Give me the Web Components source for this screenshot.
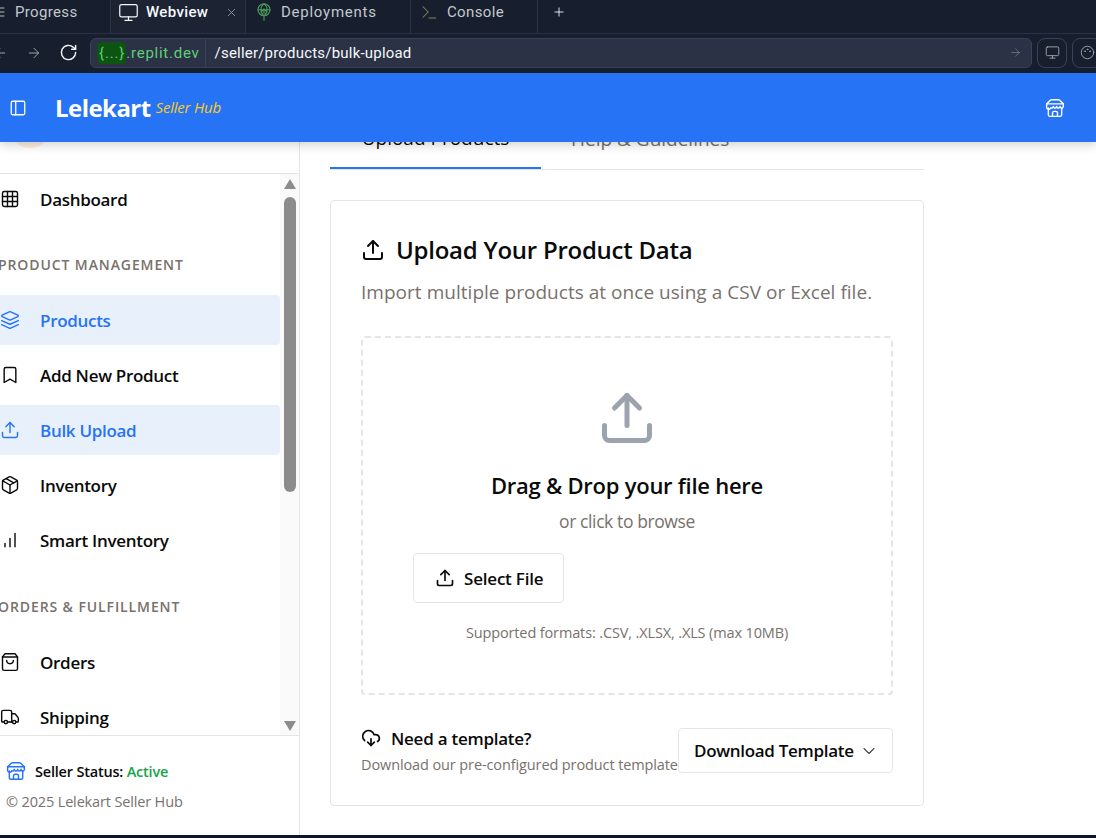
<!DOCTYPE html>
<html lang="en">
<head>
<meta charset="utf-8">
<title>Lelekart Seller Hub</title>
<style>
  html, body { margin: 0; height: 100%; overflow: hidden; background: #fff; }
  body { display: flex; flex-direction: column; height: 838px; font-family: "Open Sans", "Noto Sans", sans-serif; }
</style>
</head>
<body>
<ide-chrome></ide-chrome>
<seller-header></seller-header>
<page-body>
  <seller-sidebar slot="side"></seller-sidebar>
  <upload-page slot="main"></upload-page>
</page-body>

<script>
const ICONS = {
  panel: '<rect x="3" y="3" width="18" height="18" rx="2"/><path d="M9 3v18"/>',
  store: '<path d="m2 7 4.41-4.41A2 2 0 0 1 7.83 2h8.34a2 2 0 0 1 1.42.59L22 7"/><path d="M4 12v8a2 2 0 0 0 2 2h12a2 2 0 0 0 2-2v-8"/><path d="M15 22v-4a2 2 0 0 0-2-2h-2a2 2 0 0 0-2 2v4"/><path d="M2 7h20"/><path d="M22 7v3a2 2 0 0 1-1 1.73 2 2 0 0 1-2 0 2 2 0 0 1-1-1.73 2 2 0 0 1-1 1.73 2 2 0 0 1-2 0 2 2 0 0 1-1-1.73 2 2 0 0 1-1 1.73 2 2 0 0 1-2 0 2 2 0 0 1-1-1.73 2 2 0 0 1-1 1.73 2 2 0 0 1-2 0A2 2 0 0 1 2 10V7"/>',
  grid: '<rect x="3" y="3" width="18" height="18" rx="2"/><path d="M3 9h18M3 15h18M9 3v18M15 3v18"/>',
  layers: '<path d="m12.83 2.18a2 2 0 0 0-1.66 0L2.6 6.08a1 1 0 0 0 0 1.83l8.58 3.91a2 2 0 0 0 1.66 0l8.58-3.9a1 1 0 0 0 0-1.83Z"/><path d="m22 17.65-9.17 4.16a2 2 0 0 1-1.66 0L2 17.65"/><path d="m22 12.65-9.17 4.16a2 2 0 0 1-1.66 0L2 12.65"/>',
  bookmark: '<path d="m19 21-7-4-7 4V5a2 2 0 0 1 2-2h10a2 2 0 0 1 2 2v16z"/>',
  upload: '<path d="M21 15v4a2 2 0 0 1-2 2H5a2 2 0 0 1-2-2v-4"/><path d="m17 8-5-5-5 5"/><path d="M12 3v12"/>',
  box: '<path d="m7.5 4.27 9 5.15"/><path d="M21 8a2 2 0 0 0-1-1.73l-7-4a2 2 0 0 0-2 0l-7 4A2 2 0 0 0 3 8v8a2 2 0 0 0 1 1.73l7 4a2 2 0 0 0 2 0l7-4A2 2 0 0 0 21 16Z"/><path d="m3.3 7 8.7 5 8.7-5"/><path d="M12 22V12"/>',
  bars: '<path d="M12 20V10M18 20V4M6 20v-4"/>',
  bag: '<path d="M6 2 3 6v14a2 2 0 0 0 2 2h14a2 2 0 0 0 2-2V6l-3-4Z"/><path d="M3 6h18"/><path d="M16 10a4 4 0 0 1-8 0"/>',
  truck: '<path d="M14 18V6a2 2 0 0 0-2-2H4a2 2 0 0 0-2 2v11a1 1 0 0 0 1 1h2"/><path d="M15 18H9"/><path d="M19 18h2a1 1 0 0 0 1-1v-3.65a1 1 0 0 0-.22-.624l-3.48-4.35A1 1 0 0 0 17.52 8H14"/><circle cx="17" cy="18" r="2"/><circle cx="7" cy="18" r="2"/>',
  cloud: '<path d="M12 13v8l-4-4"/><path d="m12 21 4-4"/><path d="M4.393 15.269A7 7 0 1 1 15.71 8h1.79a4.5 4.5 0 0 1 2.436 8.284"/>',
  chevron: '<path d="m6 9 6 6 6-6"/>',
  monitor: '<rect x="2" y="3" width="20" height="14" rx="2"/><path d="M8 21h8M12 17v4"/>',
  arrow: '<path d="M5 12h14M12 5l7 7-7 7"/>',
  back: '<path d="M19 12H5M12 19l-7-7 7-7"/>',
  reload: '<path d="M21 12a9 9 0 1 1-3-6.7L21 8"/><path d="M21 3v5h-5"/>',
  close: '<path d="M18 6 6 18M6 6l12 12"/>',
  plus: '<path d="M5 12h14M12 5v14"/>',
  prompt: '<path d="m4 5 7 7-7 7"/><path d="M12 20h9"/>',
  list: '<path d="M4 6h14M4 12h14M4 18h14"/>',
  globe: '<circle cx="12" cy="9" r="8"/><path d="M4 9h16M12 1c-3 2-4 5-4 8s1 5 2 6M12 1c3 2 4 5 4 8s-1 5-2 6M12 23V8M8 12l4-4 4 4"/>',
  palette: '<circle cx="12" cy="12" r="10"/><circle cx="8" cy="10" r=".6"/><circle cx="12" cy="7" r=".6"/><circle cx="16" cy="10" r=".6"/>'
};

class UiIcon extends HTMLElement {
  connectedCallback() {
    const size = this.getAttribute('size') || 24;
    const stroke = this.getAttribute('stroke') || 2;
    this.attachShadow({ mode: 'open' });
    this.shadowRoot.innerHTML = `
      <style>
        :host { display: inline-flex; flex: none; width: ${size}px; height: ${size}px; }
        svg { width: 100%; height: 100%; display: block; }
      </style>
      <svg viewBox="0 0 24 24" fill="none" stroke="currentColor" stroke-width="${stroke}" stroke-linecap="round" stroke-linejoin="round">${ICONS[this.getAttribute('name')] || ''}</svg>`;
  }
}
customElements.define('ui-icon', UiIcon);

class IdeChrome extends HTMLElement {
  connectedCallback() {
    this.attachShadow({ mode: 'open' });
    this.shadowRoot.innerHTML = `
      <style>
        :host { display: block; flex: none; height: 73px; background: #171f2e; color: #c2c8cc; font: 15px/20px Roboto, "Open Sans", sans-serif; overflow: hidden; letter-spacing: .35px; }
        .tabs { display: flex; height: 33px; border-bottom: 1px solid #2b3245; margin-left: -15px; }
        .tab { display: flex; align-items: center; padding-bottom: 9px; border-right: 1px solid #2b3245; box-sizing: border-box; }
        .tab.first { width: 126px; padding-left: 7px; gap: 7px; }
        .tab.active { color: #f5f9fc; background: #1c2333; width: 135px; padding-left: 7px; gap: 7px; font-weight: 500; }
        .tab.active .x { margin-left: 10px; color: #9da2a6; }
        .tab.dep { width: 165px; padding-left: 9px; gap: 8px; letter-spacing: .75px; }
        .tab.con { width: 127px; padding-left: 9px; gap: 9px; }
        .plus { display: flex; align-items: center; padding-bottom: 9px; margin-left: 14px; color: #f5f9fc; }
        .green { color: #4a9a5a; }
        .olive { color: #8a8458; }
        .bar { display: flex; align-items: center; height: 37px; padding-bottom: 2px; margin-left: -8px; }
        .nav { display: flex; align-items: center; gap: 12px; color: #9da2a6; }
        .url { flex: none; display: flex; align-items: center; width: 942px; height: 30px; box-sizing: border-box; margin-left: 12px; border: 1px solid #3a4258; border-radius: 6px; background: #2b3245; color: #f5f9fc; }
        .host { display: flex; align-items: center; height: 100%; padding: 0 5px 0 6px; border-right: 1px solid #3a4258; color: #5fcf75; letter-spacing: .75px; }
        .chip { background: #0d5312; color: #5fcf75; border-radius: 5px; padding: 1px 1px 1px 2px; font-size: 15px; line-height: 20px; letter-spacing: .85px; }
        .path { flex: 1; padding-left: 9px; letter-spacing: .2px; }
        .go { margin-right: 9px; color: #6f7681; }
        .sq { flex: none; width: 30px; height: 30px; box-sizing: border-box; margin-left: 5px; border: 1px solid #3a4258; border-radius: 8px; display: flex; align-items: center; justify-content: center; color: #9da2a6; }
      </style>
      <div class="tabs">
        <div class="tab first"><ui-icon name="list" size="16" stroke="1.4"></ui-icon><span>Progress</span></div>
        <div class="tab active"><ui-icon name="monitor" size="21" stroke="1.4"></ui-icon><span>Webview</span><ui-icon class="x" name="close" size="13" stroke="1.5"></ui-icon></div>
        <div class="tab dep"><ui-icon class="green" name="globe" size="18" stroke="1.5"></ui-icon><span>Deployments</span></div>
        <div class="tab con"><ui-icon class="olive" name="prompt" size="18" stroke="1.4"></ui-icon><span>Console</span></div>
        <div class="plus"><ui-icon name="plus" size="14" stroke="1.5"></ui-icon></div>
      </div>
      <div class="bar">
        <div class="nav">
          <ui-icon name="back" size="16" stroke="1.5"></ui-icon>
          <ui-icon name="arrow" size="16" stroke="1.5" style="margin-left:6px"></ui-icon>
          <ui-icon name="reload" size="19" stroke="1.8" style="margin-left:5px;color:#f5f9fc"></ui-icon>
        </div>
        <div class="url">
          <div class="host"><span class="chip">{...}</span>.replit.dev</div>
          <div class="path">/seller/products/bulk-upload</div>
          <ui-icon class="go" name="arrow" size="13" stroke="1.5"></ui-icon>
        </div>
        <div class="sq"><ui-icon name="monitor" size="15" stroke="1.5"></ui-icon></div>
        <div class="sq"><ui-icon name="palette" size="15" stroke="1.5"></ui-icon></div>
      </div>`;
  }
}
customElements.define('ide-chrome', IdeChrome);

class SellerHeader extends HTMLElement {
  connectedCallback() {
    this.attachShadow({ mode: 'open' });
    this.shadowRoot.innerHTML = `
      <style>
        :host { display: flex; flex: none; align-items: center; height: 69px; padding: 0 31px 0 9px; background: #2673f5; color: #fff; position: relative; z-index: 10; box-shadow: 0 3px 10px rgba(0,0,0,.18); }
        .brand { font-size: 24px; font-weight: 700; margin-left: 28px; letter-spacing: -.55px; }
        .sub { font-size: 15px; font-style: italic; color: #facc15; margin-left: 5px; letter-spacing: -.2px; position: relative; top: -1px; }
        .end { margin-left: auto; }
      </style>
      <ui-icon name="panel" size="18" stroke="1.7"></ui-icon>
      <span class="brand">Lelekart</span><span class="sub">Seller Hub</span>
      <ui-icon class="end" name="store" size="20" stroke="1.7"></ui-icon>`;
  }
}
customElements.define('seller-header', SellerHeader);

class PageBody extends HTMLElement {
  connectedCallback() {
    this.attachShadow({ mode: 'open' });
    this.shadowRoot.innerHTML = `
      <style>
        :host { display: flex; flex: 1; min-height: 0; overflow: hidden; border-bottom: 3px solid #0e1525; }
        .side { flex: none; display: flex; width: 300px; }
        .main { flex: 1; min-width: 0; }
      </style>
      <div class="side"><slot name="side"></slot></div>
      <div class="main"><slot name="main"></slot></div>`;
  }
}
customElements.define('page-body', PageBody);

class NavItem extends HTMLElement {
  connectedCallback() {
    const active = this.hasAttribute('active');
    this.attachShadow({ mode: 'open' });
    this.shadowRoot.innerHTML = `
      <style>
        :host { display: flex; flex: none; align-items: center; gap: 20px; height: 50px; margin-left: -20px; padding-left: 20px; border-radius: 4px; font-size: 17px; font-weight: 600; letter-spacing: -.3px; color: ${active ? '#2673f5' : '#0a0a0a'}; background: ${active ? '#e8f0fc' : 'transparent'}; }
      </style>
      <ui-icon name="${this.getAttribute('icon')}" size="20" stroke="1.7"></ui-icon>
      <slot></slot>`;
  }
}
customElements.define('nav-item', NavItem);

class NavHeading extends HTMLElement {
  connectedCallback() {
    this.attachShadow({ mode: 'open' });
    this.shadowRoot.innerHTML = `
      <style>
        :host { display: block; flex: none; font-size: 14px; line-height: 20px; font-weight: 600; letter-spacing: .9px; color: #78716c; white-space: nowrap; }
      </style>
      <slot></slot>`;
  }
}
customElements.define('nav-heading', NavHeading);

class SellerSidebar extends HTMLElement {
  connectedCallback() {
    this.attachShadow({ mode: 'open' });
    this.shadowRoot.innerHTML = `
      <style>
        :host { display: flex; flex-direction: column; width: 300px; box-sizing: border-box; border-right: 1px solid #e5e5e5; background: #fff; min-height: 0; }
        .top { flex: none; height: 31px; border-bottom: 1px solid #e5e5e5; overflow: hidden; }
        .avatar { width: 40px; height: 40px; border-radius: 50%; margin: -34px 0 0 10px; background: #fdeee0; }
        .scroll { flex: none; height: 561px; display: flex; overflow: hidden; border-bottom: 1px solid #e5e5e5; }
        .nav { flex: none; width: 280px; display: flex; flex-direction: column; }
        .nav nav-item + nav-item { margin-top: 5px; }
        .nav nav-item { margin-left: -20px; }
        .h1 { margin: 31px 0 20px -2px; }
        .h2 { margin: 32px 0 20px -2px; }
        .track { flex: 1; background: #fafafa; display: flex; flex-direction: column; align-items: center; }
        .up, .down { flex: none; width: 0; height: 0; border-left: 6.5px solid transparent; border-right: 6.5px solid transparent; }
        .up { margin-top: 5px; border-bottom: 10px solid #8c8c8c; }
        .thumb { flex: none; width: 12px; height: 295px; margin-top: 8px; border-radius: 6px; background: #8c8c8c; }
        .down { margin-top: auto; margin-bottom: 4px; border-top: 10px solid #8c8c8c; }
        .foot { flex: 1; padding: 25px 0 0 6px; font-size: 14.5px; }
        .status { display: flex; align-items: center; gap: 9px; color: #0a0a0a; font-weight: 600; letter-spacing: -.2px; height: 20px; }
        .status ui-icon { color: #2673f5; }
        .status b { color: #16a34a; font-weight: 600; }
        .copy { margin-top: 11px; color: #78716c; letter-spacing: -.15px; line-height: 20px; }
      </style>
      <div class="top"><div class="avatar"></div></div>
      <div class="scroll">
        <div class="nav">
          <nav-item icon="grid">Dashboard</nav-item>
          <nav-heading class="h1">PRODUCT MANAGEMENT</nav-heading>
          <nav-item icon="layers" active>Products</nav-item>
          <nav-item icon="bookmark">Add New Product</nav-item>
          <nav-item icon="upload" active>Bulk Upload</nav-item>
          <nav-item icon="box">Inventory</nav-item>
          <nav-item icon="bars">Smart Inventory</nav-item>
          <nav-heading class="h2">ORDERS &amp; FULFILLMENT</nav-heading>
          <nav-item icon="bag">Orders</nav-item>
          <nav-item icon="truck">Shipping</nav-item>
        </div>
        <div class="track"><div class="up"></div><div class="thumb"></div><div class="down"></div></div>
      </div>
      <div class="foot">
        <div class="status"><ui-icon name="store" size="20" stroke="1.8"></ui-icon><span>Seller Status: <b>Active</b></span></div>
        <div class="copy">© 2025 Lelekart Seller Hub</div>
      </div>`;
  }
}
customElements.define('seller-sidebar', SellerSidebar);

class UploadPage extends HTMLElement {
  connectedCallback() {
    this.attachShadow({ mode: 'open' });
    this.shadowRoot.innerHTML = `
      <style>
        :host { display: block; width: 594px; margin: -18px 0 0 30px; color: #0a0a0a; }
        .tabs { display: flex; height: 45px; border-bottom: 1px solid #e5e5e5; font-size: 19px; font-weight: 500; }
        .tab { display: flex; align-items: center; justify-content: center; width: 211px; height: 45px; padding-bottom: 16px; box-sizing: border-box; color: #78716c; white-space: nowrap; }
        .tab.on { color: #0a0a0a; border-bottom: 2px solid #2673f5; }
        .tab.help { width: auto; padding-left: 30px; }
        .card { margin-top: 30px; height: 606px; box-sizing: border-box; padding: 30px; border: 1px solid #e5e5e5; border-radius: 4px; }
        h2 { display: flex; align-items: center; gap: 11px; margin: 3px 0 0; font-size: 24px; line-height: 32px; font-weight: 600; letter-spacing: -.25px; }
        .lead { margin: 14px 0 0; font-size: 19px; line-height: 24px; color: #78716c; letter-spacing: .03px; }
        .drop { height: 359px; box-sizing: border-box; margin-top: 32px; padding-top: 50px; border: 2px dashed #e5e5e5; border-radius: 4px; display: flex; flex-direction: column; align-items: center; }
        .big { color: #9ca3af; }
        h3 { margin: 22px 0 0; font-size: 22px; line-height: 30px; font-weight: 600; letter-spacing: -.25px; }
        .browse { margin: 9px 0 0; font-size: 17.5px; line-height: 24px; color: #78716c; letter-spacing: -.4px; }
        .btn { align-self: flex-start; display: flex; align-items: center; gap: 9px; height: 50px; margin: 20px 0 0 50px; padding: 0 20px 0 21px; box-sizing: border-box; border: 1px solid #e5e5e5; border-radius: 4px; font-size: 17px; font-weight: 600; letter-spacing: -.2px; }
        .fmt { margin: 20px 0 0; font-size: 14.5px; line-height: 20px; color: #78716c; letter-spacing: -.13px; }
        .foot { display: flex; align-items: flex-start; margin-top: 32px; }
        .need { flex: 1; min-width: 0; white-space: nowrap; }
        .need b { display: flex; align-items: center; gap: 10px; height: 22px; font-size: 17px; font-weight: 600; letter-spacing: -.25px; }
        .need span { display: block; margin-top: 6px; font-size: 14.5px; line-height: 20px; color: #78716c; letter-spacing: -.11px; }
        .dl { flex: none; display: flex; align-items: center; gap: 5px; width: 215px; height: 45px; box-sizing: border-box; padding-left: 15px; border: 1px solid #e5e5e5; border-radius: 4px; font-size: 17px; font-weight: 600; letter-spacing: -.3px; margin-top: 1px; }
        .dl ui-icon { color: #444; }
      </style>
      <div class="tabs">
        <div class="tab on">Upload Products</div>
        <div class="tab help">Help &amp; Guidelines</div>
      </div>
      <div class="card">
        <h2><ui-icon name="upload" size="24" stroke="2"></ui-icon>Upload Your Product Data</h2>
        <p class="lead">Import multiple products at once using a CSV or Excel file.</p>
        <div class="drop">
          <ui-icon class="big" name="upload" size="60" stroke="2"></ui-icon>
          <h3>Drag &amp; Drop your file here</h3>
          <p class="browse">or click to browse</p>
          <div class="btn"><ui-icon name="upload" size="20" stroke="2"></ui-icon>Select File</div>
          <p class="fmt">Supported formats: .CSV, .XLSX, .XLS (max 10MB)</p>
        </div>
        <div class="foot">
          <div class="need">
            <b><ui-icon name="cloud" size="20" stroke="2"></ui-icon>Need a template?</b>
            <span>Download our pre-configured product template</span>
          </div>
          <div class="dl">Download Template <ui-icon name="chevron" size="20" stroke="1.3"></ui-icon></div>
        </div>
      </div>`;
  }
}
customElements.define('upload-page', UploadPage);
</script>
</body>
</html>
